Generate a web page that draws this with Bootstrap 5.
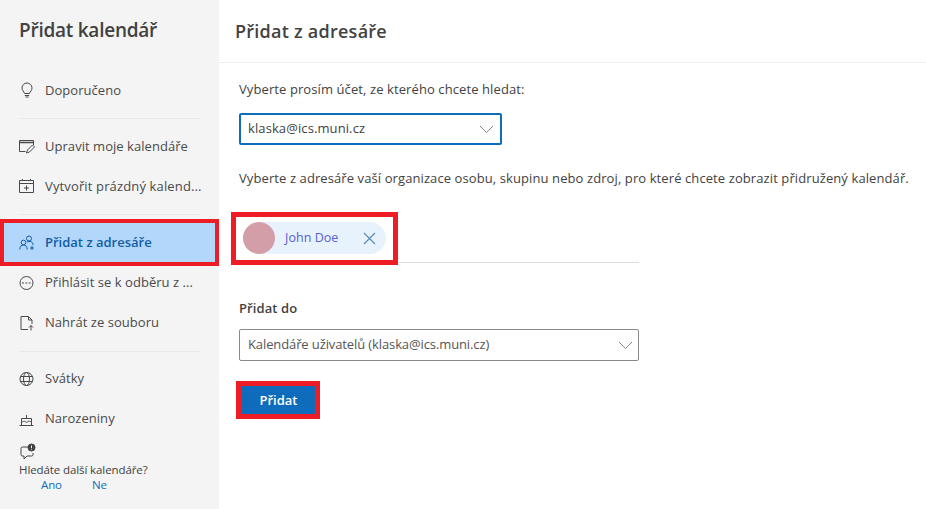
<!doctype html>
<html lang="cs">
<head>
<meta charset="utf-8">
<title>Přidat kalendář</title>
<link href="https://cdn.jsdelivr.net/npm/bootstrap@5.3.0/dist/css/bootstrap.min.css" rel="stylesheet">
<style>
html,body{height:100%;overflow:hidden}
body{font-family:"Open Sans","Noto Sans",sans-serif;font-size:13px;color:#424242;background:#fff;letter-spacing:.04px}
.shell{width:926px;height:509px}
.side{width:219px;background:#f4f4f4;flex:none}
.side-title{font-size:19px;font-weight:600;color:#424242;padding:18px 0 0 19px;height:70px;line-height:25px;letter-spacing:-.25px}
.side-item{height:40px;padding-left:19px;gap:10px;color:#4a4a4a;white-space:nowrap}
.side-item svg{width:16px;height:16px;flex:none;color:#4a4a4a}
.nudge span{padding-top:1px}
.wide-text{letter-spacing:.14px}
.side-rule{height:1px;background:#e8e8e8;margin:8px 19px 7px 19px}
.hl-frame{border:4px solid #ee1c25;margin:-3px 0 -3px 0;height:47px}
.hl-item{height:39px;background:#b3d6fb;color:#115ea3;font-weight:600;padding-left:15px;gap:10px;white-space:nowrap;letter-spacing:0}
.hl-item svg{width:16px;height:16px;flex:none}
.fb{padding-left:19px;font-size:11.5px;line-height:15px;color:#424242;margin-top:4px;letter-spacing:-.1px}
.fb svg{display:block;width:18px;height:18px;margin-bottom:1px}
.fb-links{padding-left:22px;gap:30px;color:#0f6cbd;margin-top:0}
.head{height:63px;border-bottom:1px solid #eee;padding:18px 0 0 16px;font-size:18px;font-weight:600;line-height:26px;color:#424242;letter-spacing:.25px}
.body-pane{padding:17px 0 0 20px}
.lbl{line-height:18px;height:18px;white-space:nowrap;letter-spacing:.095px}
.lbl-desc{margin-top:24px}
.lbl-to{margin-top:36px;font-weight:600}
.pick{background:#fff;color:#424242;white-space:nowrap;font-size:13px}
.pick-a span{letter-spacing:.1px}
.pick-b span{letter-spacing:-.11px}
.pick svg{width:15px;height:9px;flex:none;color:#8a8a8a}
.pick-a{width:263px;height:32px;border:2px solid #0f6cbd;border-radius:2px;padding:0 6px 0 7px;margin-top:15px}
.pick-b{width:400px;height:32px;border:1px solid #8a8a8a;border-radius:2px;padding:0 5px 0 8px;margin-top:12px;color:#555}
.chip-row{width:400px;height:51px;border-bottom:1px solid #ddd;margin-top:25px}
.chip-frame{width:167px;height:53px;margin-left:-8px;border:5px solid #ee1c25;background:#fff;padding:5px 0 0 7px}
.chip{width:143px;height:32px;border-radius:16px;background:#e8f2fc;color:#5460d6;font-size:12.5px}
.chip i{display:block;width:32px;height:32px;border-radius:50%;background:#d49ea8;flex:none;margin-right:10px}
.chip span{padding-top:1px}
.chip svg{width:13px;height:13px;margin-left:auto;margin-right:10px;color:#5a8db5}
.add-frame{width:84px;height:38px;border:5px solid #ee1c25;margin:20px 0 0 -3px;padding:0}
.add-btn{display:block;width:100%;height:100%;background:#0f6cbd;color:#fff;font-weight:600;font-size:13px;border:0;border-radius:0;padding:0 0 0 1px;line-height:1}
</style>
</head>
<body>
<div class="shell d-flex">
  <aside class="side d-flex flex-column">
    <div class="side-title">Přidat kalendář</div>
    <div class="side-item nudge d-flex align-items-center">
      <svg viewBox="0 0 16 16" fill="none" stroke="currentColor"><path d="M5.500 11.500C5 9.500 3 8.500 3 6a5 5 0 0 1 10 0c0 2.500-2 3.500-2.500 5.500zM5.800 13.500h4.400M6.500 15h3"/></svg>
      <span>Doporučeno</span>
    </div>
    <div class="side-rule"></div>
    <div class="side-item nudge d-flex align-items-center">
      <svg viewBox="0 0 16 16" fill="none" stroke="currentColor"><path d="M6.500 13.500H.5v-11h14V7"/><path d="M.5 4.500h14" stroke-width="1.500"/><path d="M7.500 15l1-3 5-5 2 2-5 5z"/></svg>
      <span>Upravit moje kalendáře</span>
    </div>
    <div class="side-item nudge d-flex align-items-center">
      <svg viewBox="0 0 16 16" fill="none" stroke="currentColor"><path d="M.5 2.500h14v12H.5zM.5 5.500h14M3.500 1v2M11.500 1v2M7.500 7.500v5M5 10h5"/></svg>
      <span class="wide-text">Vytvořit prázdný kalend...</span>
    </div>
    <div class="side-rule"></div>
    <div class="hl-frame">
      <div class="hl-item d-flex align-items-center">
        <svg viewBox="0 0 16 16" fill="none" stroke="currentColor"><circle cx="10" cy="3.500" r="2.500"/><circle cx="4.500" cy="7.500" r="2.300"/><path d="M.8 14.500c0-3 1.500-4.500 3.700-4.500s3.500 1.500 3.700 4.500M8 6.800c1.200 0 2-.3 3-.3 2 0 3 1.500 3 3.500M13 11v4M11 13h4"/></svg>
        <span>Přidat z adresáře</span>
      </div>
    </div>
    <div class="side-item d-flex align-items-center">
      <svg viewBox="0 0 16 16" fill="none" stroke="currentColor"><circle cx="7.500" cy="8" r="6.500"/><path d="M3 8h9" stroke-dasharray="2 1.300" stroke-width="1.200"/></svg>
      <span>Přihlásit se k odběru z ...</span>
    </div>
    <div class="side-item d-flex align-items-center">
      <svg viewBox="0 0 16 16" fill="none" stroke="currentColor"><path d="M9 14.500H2V1.500h7.500L13 5v4M9.500 1.500V5H13M12 10.500v5M10 12.500l2-2 2 2"/></svg>
      <span>Nahrát ze souboru</span>
    </div>
    <div class="side-rule"></div>
    <div class="side-item d-flex align-items-center">
      <svg viewBox="0 0 16 16" fill="none" stroke="currentColor"><circle cx="7.500" cy="8" r="6.500"/><ellipse cx="7.500" cy="8" rx="3" ry="6.500"/><path d="M1.300 5.500h12.400M1.300 10.500h12.400"/></svg>
      <span>Svátky</span>
    </div>
    <div class="side-item d-flex align-items-center">
      <svg viewBox="0 0 16 16" fill="none" stroke="currentColor"><path d="M7.500 4v3.500M2.500 14V7.500h10V14M.5 14.500h14M2.500 10.500c1.500 1 2.500-1 3.500 0s2 1 3 0 2 .5 3.500 0"/></svg>
      <span>Narozeniny</span>
    </div>
    <div class="fb">
      <svg viewBox="0 0 18 18" fill="none" stroke="currentColor"><path d="M9 4H3.500A1.500 1.500 0 0 0 2 5.500v6A1.500 1.500 0 0 0 3.500 13H5v3l3-3h4.500a1.500 1.500 0 0 0 1.500-1.500V10"/><circle cx="12.500" cy="4.500" r="3.500" fill="currentColor"/><path d="M12.500 2.500v2.500M12.500 5.800v.8" stroke="#fff"/></svg>
      <div>Hledáte další kalendáře?</div>
      <div class="fb-links d-flex"><span>Ano</span><span>Ne</span></div>
    </div>
  </aside>
  <main class="flex-grow-1">
    <div class="head">Přidat z adresáře</div>
    <div class="body-pane">
      <div class="lbl">Vyberte prosím účet, ze kterého chcete hledat:</div>
      <div class="pick pick-a d-flex align-items-center justify-content-between">
        <span>klaska@ics.muni.cz</span>
        <svg viewBox="0 0 15 9" fill="none" stroke="currentColor"><path d="M1 1l6.500 6.500L14 1"/></svg>
      </div>
      <div class="lbl lbl-desc">Vyberte z adresáře vaší organizace osobu, skupinu nebo zdroj, pro které chcete zobrazit přidružený kalendář.</div>
      <div class="chip-row">
        <div class="chip-frame">
          <div class="chip d-flex align-items-center">
            <i></i><span>John Doe</span>
            <svg viewBox="0 0 13 13" fill="none" stroke="currentColor" stroke-width="1.200"><path d="M1 1l11 11M12 1L1 12"/></svg>
          </div>
        </div>
      </div>
      <div class="lbl lbl-to">Přidat do</div>
      <div class="pick pick-b d-flex align-items-center justify-content-between">
        <span>Kalendáře uživatelů (klaska@ics.muni.cz)</span>
        <svg viewBox="0 0 15 9" fill="none" stroke="currentColor"><path d="M1 1l6.500 6.500L14 1"/></svg>
      </div>
      <div class="add-frame"><button type="button" class="btn add-btn">Přidat</button></div>
    </div>
  </main>
</div>
<script src="https://cdn.jsdelivr.net/npm/bootstrap@5.3.0/dist/js/bootstrap.bundle.min.js"></script>
</body>
</html>
